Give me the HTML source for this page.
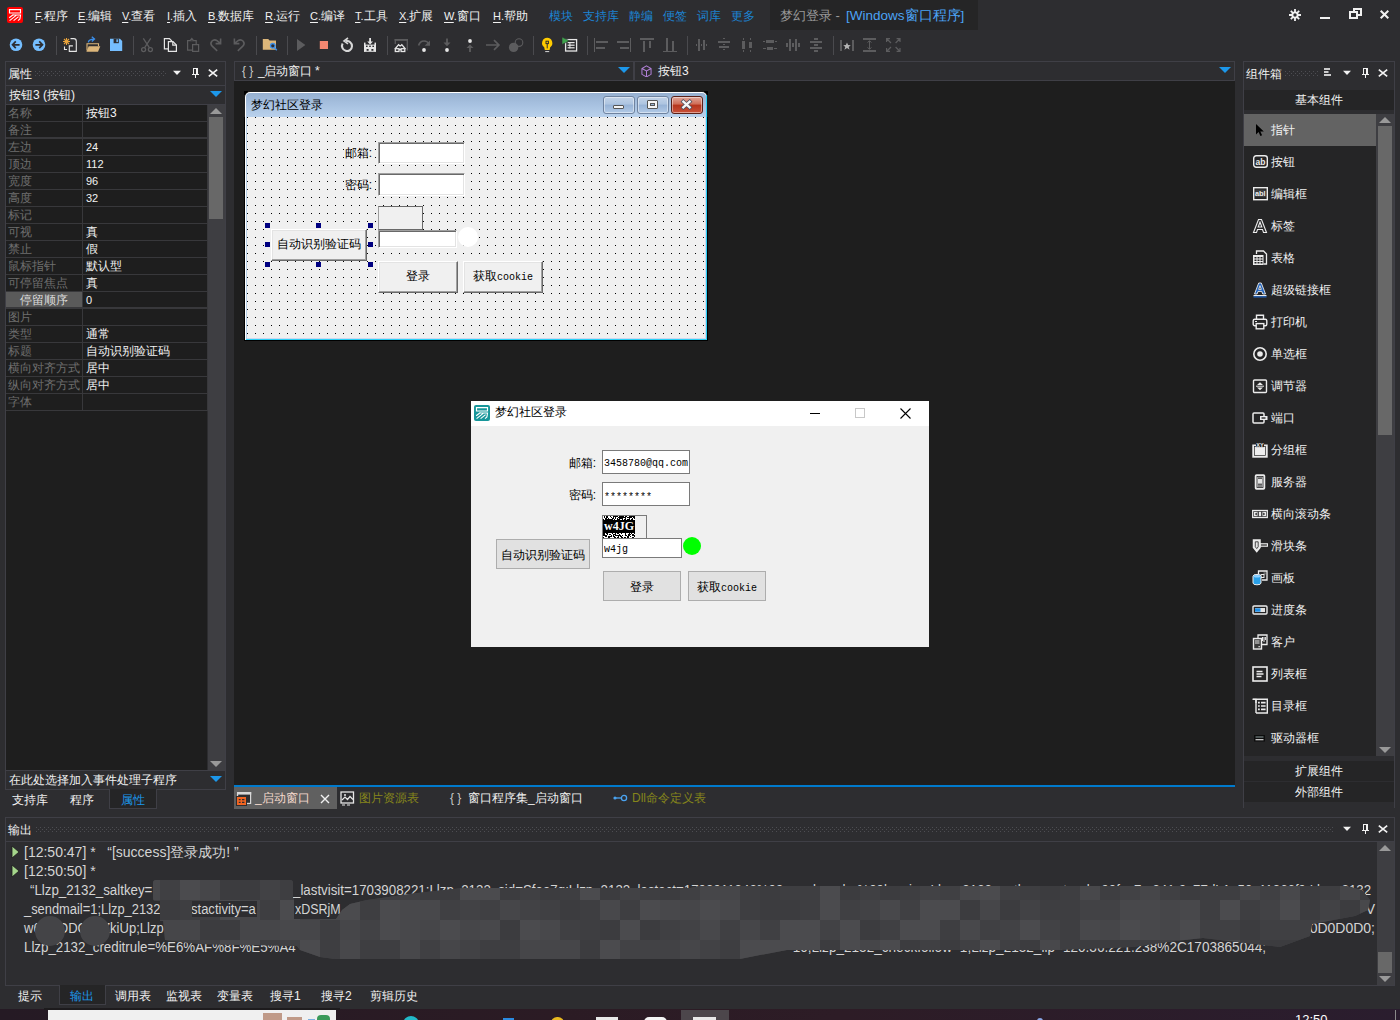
<!DOCTYPE html><html><head><meta charset="utf-8"><title>梦幻登录</title><style>
*{box-sizing:border-box;margin:0;padding:0}
html,body{width:1400px;height:1020px;overflow:hidden;background:#2d2d30}
body{font-family:"Liberation Sans",sans-serif;font-size:12px;color:#f1f1f1;position:relative}
.a{position:absolute}
.t{position:absolute;white-space:nowrap;line-height:16px;height:16px}
.m{position:absolute;white-space:nowrap;line-height:16px;height:16px;top:8px;font-size:12px;color:#f1f1f1}
.m i{font-style:normal;font-size:11px}
.m u{text-decoration:underline;text-underline-offset:2px}
.mb{color:#1c84d4}
.sep{position:absolute;width:1px;top:36px;height:19px;background:#4a4a4e}
.pl{position:absolute;left:6px;width:76px;height:16px;line-height:16px;background:#1e1e1e;color:#6e6e6e;padding-left:2px;white-space:nowrap;overflow:hidden;font-size:12px}
.pv{position:absolute;left:83px;width:124px;height:16px;line-height:16px;background:#1e1e1e;color:#f1f1f1;padding-left:3px;white-space:nowrap;overflow:hidden;font-size:12px}
.ti{position:absolute;left:1244px;width:133px;height:32px}
.ti span{position:absolute;left:27px;top:8px;line-height:16px;font-size:12px;color:#f1f1f1;white-space:nowrap}
.ti svg{position:absolute;left:8px;top:8px}
.ol{position:absolute;left:24px;white-space:nowrap;font-size:14px;line-height:19px;height:19px;color:#d4d4d4}
.bt{position:absolute;white-space:nowrap;line-height:16px;height:16px;top:988px;font-size:12px;color:#f1f1f1}
.wl{position:absolute;white-space:nowrap;color:#000;font-size:12px;line-height:14px}
</style></head><body>
<!-- menu bar -->
<svg class="a" style="left:7px;top:7px" width="16" height="16" viewBox="0 0 16 16"><rect width="16" height="16" rx="2" fill="#ff0000"/><path d="M2.500 2.600h11v3.400h-11zM6 8h7.500l-.600 4-1.900 1.600M2.200 10.800l4.300-3.300M2.600 13.600l6.600-5.200M6.600 13.600l5-4" stroke="#fff" stroke-width="1.150" fill="none"/></svg>
<div class="m" style="left:35px"><i><u>F</u>.</i>程序</div>
<div class="m" style="left:78px"><i><u>E</u>.</i>编辑</div>
<div class="m" style="left:122px"><i><u>V</u>.</i>查看</div>
<div class="m" style="left:167px"><i><u>I</u>.</i>插入</div>
<div class="m" style="left:208px"><i><u>B</u>.</i>数据库</div>
<div class="m" style="left:265px"><i><u>R</u>.</i>运行</div>
<div class="m" style="left:310px"><i><u>C</u>.</i>编译</div>
<div class="m" style="left:355px"><i><u>T</u>.</i>工具</div>
<div class="m" style="left:399px"><i><u>X</u>.</i>扩展</div>
<div class="m" style="left:444px"><i><u>W</u>.</i>窗口</div>
<div class="m" style="left:493px"><i><u>H</u>.</i>帮助</div>
<div class="m mb" style="left:549px">模块</div>
<div class="m mb" style="left:583px">支持库</div>
<div class="m mb" style="left:629px">静编</div>
<div class="m mb" style="left:663px">便签</div>
<div class="m mb" style="left:697px">词库</div>
<div class="m mb" style="left:731px">更多</div>
<div class="a" style="left:770px;top:0;width:208px;height:30px;background:#252526"></div>
<div class="t" style="left:780px;top:7px;font-size:13px;line-height:18px;height:18px;color:#999">梦幻登录 -</div>
<div class="t" style="left:846px;top:7px;font-size:13.5px;line-height:18px;height:18px;color:#4ba3f5">[Windows窗口程序]</div>
<svg class="a" style="left:1288px;top:8px" width="14" height="14" viewBox="0 0 14 14"><g stroke="#f1f1f1" stroke-width="1.8"><path d="M7 1v12M1 7h12M2.8 2.8l8.4 8.4M11.2 2.8l-8.4 8.4"/></g><circle cx="7" cy="7" r="3.6" fill="#f1f1f1"/><circle cx="7" cy="7" r="1.7" fill="#2d2d30"/></svg>
<div class="a" style="left:1320px;top:17px;width:10px;height:2px;background:#f1f1f1"></div>
<svg class="a" style="left:1349px;top:8px" width="13" height="11" viewBox="0 0 13 11" shape-rendering="crispEdges"><g fill="#f1f1f1"><rect x="4" y="0" width="9" height="2"/><rect x="11" y="0" width="2" height="8"/><rect x="4" y="0" width="2" height="3"/><rect x="9" y="6" width="4" height="2"/><rect x="0" y="3" width="9" height="2"/><rect x="0" y="9" width="9" height="2"/><rect x="0" y="3" width="2" height="8"/><rect x="7" y="3" width="2" height="8"/></g></svg>
<svg class="a" style="left:1379px;top:9px" width="11" height="11" viewBox="0 0 11 11"><path d="M1.700 1.700l7.600 7.600M9.300 1.700l-7.600 7.600" stroke="#f1f1f1" stroke-width="2"/></svg>
<!-- toolbar -->
<svg class="a" style="left:0;top:30px" width="920" height="30" viewBox="0 30 920 30"><circle cx="16" cy="44.8" r="6.3" fill="#75beff"/><path d="M19.6 44.8H12.8M15.8 41.4l-3.3 3.4 3.3 3.4" stroke="#2d2d30" stroke-width="1.7" fill="none"/><circle cx="39" cy="44.8" r="6.3" fill="#75beff"/><path d="M35.4 44.8H42.2M39.2 41.4l3.3 3.4-3.3 3.4" stroke="#2d2d30" stroke-width="1.7" fill="none"/><g stroke="#e8a33c" stroke-width="1.1"><path d="M66.5 38v7M63 41.5h7M64 39l5 5M69 39l-5 5"/></g><path d="M70.5 38.6h3.2q2.6 0 2.6 2.6v10.2h-7v-5.5h3.6M64.5 46.5v3h2.6" stroke="#e6e6e6" stroke-width="1.1" fill="none"/><path d="M87 50.5V43.8h11.5V46" stroke="#dcb67a" stroke-width="1.1" fill="none"/><path d="M86.4 51.8l2.3-5.6h11.6l-2.3 5.6z" fill="#dcb67a"/><path d="M88.3 42.3q.6-3.2 5.6-3.2M91.8 36.8l2.7 2.3-2.7 2.3" stroke="#3b8eea" stroke-width="1.3" fill="none"/><path d="M110 38.8h10l2.2 2.2v10h-12.2z" fill="#75beff"/><rect x="113.6" y="38.8" width="5.2" height="4.4" fill="#2d2d30"/><rect x="116.4" y="39.3" width="1.5" height="2.8" fill="#75beff"/><g stroke="#5c5c5e" stroke-width="1.3" fill="none"><path d="M143.3 38.3l6.2 9.6M150.7 38.3l-6.2 9.6"/><circle cx="143.6" cy="49.6" r="2"/><circle cx="150.4" cy="49.6" r="2"/></g><g stroke="#e6e6e6" stroke-width="1.2" fill="#2d2d30"><path d="M164.4 38.6h5l2.2 2.2v8h-7.2z"/><path d="M168.4 41.6h4.6l3.4 3.4v6.4h-8z"/><path d="M172.8 41.8v3.4h3.4" fill="none"/></g><g stroke="#5c5c5e" stroke-width="1.2" fill="#2d2d30"><path d="M187.6 40.6h8.6v9.6h-8.6z"/><path d="M190 40.6l1.8-2.2 1.8 2.2"/><path d="M192.6 44.6h6v6.8h-6z"/></g><g stroke="#5c5c5e" stroke-width="1.6" fill="none"><path d="M217.2 50.8l-5-4.6q-2.4-2.6-.4-5 2.4-2.4 5.2-.6l3 2.4M220.6 38.6v5h-5"/><path d="M237.8 50.8l5-4.6q2.4-2.6.4-5-2.4-2.4-5.2-.6l-3 2.4M234.4 38.6v5h5"/></g><path d="M262.8 39h5.4l1.4 1.6h6.4v9.2h-13.2z" fill="#dcb67a"/><circle cx="272.8" cy="45.8" r="2.3" fill="#2d2d30" stroke="#3b8eea" stroke-width="1.3"/><path d="M274.4 47.6l2.4 2.6" stroke="#3b8eea" stroke-width="1.5"/><path d="M297 39l8.4 6-8.4 6z" fill="#5c5c5e"/><rect x="319.8" y="41" width="8.2" height="8" fill="#f48771"/><path d="M346 41.100A5 5 0 1 1 342.600 43.600" stroke="#d6d6d6" stroke-width="2.100" fill="none"/><path d="M348 38l-4 3 4 2.800" stroke="#d6d6d6" stroke-width="1.600" fill="none"/><g fill="#e6e6e6"><path d="M369.2 38h1.8v3.6h2l-2.9 3-2.9-3h2z"/><rect x="364" y="42.6" width="1.5" height="9"/><rect x="374.5" y="42.6" width="1.5" height="9"/><rect x="364" y="44.6" width="12" height="7.2"/></g><g fill="#2d2d30"><rect x="366" y="45.6" width="1.6" height="1.4"/><rect x="369.2" y="45.6" width="1.6" height="1.4"/><rect x="372.4" y="45.6" width="1.6" height="1.4"/><rect x="366.6" y="49" width="2" height="1.8"/><rect x="371.4" y="49" width="2" height="1.8"/></g><path d="M395.300 44V39.700h12v10.800" stroke="#5c5c5e" stroke-width="1.300" fill="none"/><rect x="394.600" y="39" width="13.400" height="1.800" fill="#5c5c5e"/><g stroke="#e6e6e6" stroke-width="1.300" fill="none"><path d="M395 49l3.600-4.400 1.500 1.500M405.400 49l-3.600-4.400-1.500 1.500"/><rect x="395.300" y="48.700" width="3.700" height="2.800" fill="#2d2d30"/><rect x="401.100" y="48.700" width="3.700" height="2.800" fill="#2d2d30"/><path d="M399 49.600h2.100"/></g><path d="M418.6 45.4q1.400-4.400 5.400-4.400 3.600 0 4.800 3" stroke="#5c5c5e" stroke-width="1.7" fill="none"/><path d="M430 40.400v5.400h-5.400z" fill="#5c5c5e"/><circle cx="424" cy="50" r="1.9" fill="#e6e6e6"/><path d="M446.100 38.600h1.800v4h2.600l-3.500 3.600-3.500-3.600h2.600z" fill="#5c5c5e"/><circle cx="447" cy="50" r="1.900" fill="#e6e6e6"/><circle cx="470" cy="41" r="1.900" fill="#e6e6e6"/><path d="M469.100 52v-4h-2.600l3.500-3.600 3.500 3.600h-2.600v4z" fill="#5c5c5e"/><path d="M486 45h12.500M494 40.200l4.900 4.800-4.900 4.800" stroke="#5c5c5e" stroke-width="1.700" fill="none"/><circle cx="519" cy="42.600" r="3.800" stroke="#5c5c5e" stroke-width="1.100" fill="none"/><circle cx="513.600" cy="47.400" r="4.700" fill="#5c5c5e"/><path d="M547.2 37.800a5.200 5.200 0 0 1 3 9.400l-.6 2.800h-4.800l-.6-2.800a5.200 5.200 0 0 1 3-9.400z" fill="#ffcc00"/><rect x="546" y="41.200" width="2.400" height="2.400" fill="none" stroke="#2d2d30" stroke-width="1"/><rect x="546.700" y="43.800" width="1" height="4.600" fill="#2d2d30"/><rect x="545.200" y="51" width="4" height="1.100" fill="#c8c8c8"/><rect x="565.600" y="39.600" width="11" height="11.400" fill="#2d2d30" stroke="#e6e6e6" stroke-width="1.300"/><g fill="#e6e6e6"><rect x="567.600" y="42" width="7" height="1.200"/><rect x="567.600" y="44.600" width="7" height="1.200"/><rect x="567.600" y="47.200" width="7" height="1.200"/><rect x="569.400" y="42" width="1" height="6.400"/></g><path d="M562 37l7.400 3.800-7.400 3.800z" fill="#3fa34d" stroke="#2d2d30" stroke-width=".6"/><g shape-rendering="crispEdges" fill="#5c5c5e"><rect x="594" y="38" width="1" height="14"/><rect x="596" y="41" width="12" height="2"/><rect x="596" y="47" width="9" height="2"/><rect x="630" y="38" width="1" height="14"/><rect x="617" y="41" width="12" height="2"/><rect x="620" y="47" width="9" height="2"/><rect x="640" y="38" width="14" height="2"/><rect x="643" y="41" width="2" height="11"/><rect x="649" y="41" width="2" height="7"/><rect x="663" y="51" width="14" height="1"/><rect x="666" y="38" width="2" height="13"/><rect x="672" y="41" width="2" height="10"/><rect x="698" y="39" width="2" height="12"/><rect x="703" y="40" width="2" height="10"/><rect x="696" y="44" width="1" height="2"/><rect x="701" y="44" width="1" height="2"/><rect x="706" y="44" width="1" height="2"/><rect x="718" y="41" width="12" height="2"/><rect x="719" y="46" width="10" height="2"/><rect x="723" y="38" width="2" height="1"/><rect x="723" y="44" width="2" height="1"/><rect x="723" y="49" width="2" height="1"/><rect x="742" y="41" width="3" height="8"/><rect x="749" y="42" width="3" height="6"/><rect x="743" y="38" width="1" height="2"/><rect x="743" y="50" width="1" height="2"/><rect x="750" y="38" width="1" height="2"/><rect x="750" y="50" width="1" height="2"/><rect x="766" y="40" width="8" height="3"/><rect x="767" y="47" width="6" height="3"/><rect x="763" y="41" width="2" height="1"/><rect x="775" y="41" width="2" height="1"/><rect x="763" y="48" width="3" height="1"/><rect x="774" y="48" width="3" height="1"/><rect x="789" y="39" width="2" height="12"/><rect x="795" y="39" width="2" height="12"/><rect x="786" y="43" width="2" height="4"/><rect x="792" y="43" width="2" height="4"/><rect x="798" y="43" width="2" height="4"/><rect x="810" y="41" width="12" height="2"/><rect x="810" y="47" width="12" height="2"/><rect x="814" y="38" width="4" height="2"/><rect x="814" y="44" width="4" height="2"/><rect x="814" y="50" width="4" height="2"/><rect x="840" y="40" width="2" height="11"/><rect x="852" y="40" width="2" height="11"/><rect x="863" y="38" width="13" height="2"/><rect x="863" y="50" width="13" height="2"/><rect x="869" y="41" width="1" height="8"/></g><path d="M847 42.400l1.100 2.600 2.700.300-2.100 1.700.900 2.800-2.600-1.700-2.600 1.700.900-2.800-2.100-1.700 2.700-.300z" fill="#b4b4b4"/><path d="M867.500 42.500l2-1.700 2 1.700M867.500 47.500l2 1.700 2-1.700" stroke="#5c5c5e" stroke-width="1" fill="none"/><g stroke="#5c5c5e" stroke-width="1.200" fill="none"><path d="M886.600 42v-3.400h3.400M887 39l4 4M896.600 38.600h3.400v3.400M899.600 39l-4 4M886.600 48v3.400h3.400M887 51l4-4M900 48v3.400h-3.400M899.600 51l-4-4"/></g></svg>
<div class="sep" style="left:56px"></div>
<div class="sep" style="left:133px"></div>
<div class="sep" style="left:256px"></div>
<div class="sep" style="left:287px"></div>
<div class="sep" style="left:387px"></div>
<div class="sep" style="left:533px"></div>
<div class="sep" style="left:587px"></div>
<div class="sep" style="left:687px"></div>
<div class="sep" style="left:833px"></div>
<!-- left panel -->
<div class="a" style="left:5px;top:61px;width:221px;height:729px;border:1px solid #3f3f46"></div>
<div class="t" style="left:8px;top:66px;font-size:12px">属性</div>
<svg class="a" style="left:35px;top:71px" width="131" height="5"><defs><pattern id="g35" width="4" height="4" patternUnits="userSpaceOnUse"><rect x="0" y="0" width="1" height="1" fill="#4d4d52"/><rect x="2" y="2" width="1" height="1" fill="#4d4d52"/></pattern></defs><rect width="131" height="5" fill="url(#g35)"/></svg>
<svg class="a" style="left:171px;top:66px" width="50" height="14" viewBox="0 0 50 14"><path d="M2 4.800h8l-4 4.200z" fill="#f1f1f1"/><g fill="#f1f1f1" shape-rendering="crispEdges"><rect x="22" y="2" width="5" height="1"/><rect x="22" y="2" width="1" height="6"/><rect x="25" y="2" width="2" height="6"/><rect x="21" y="8" width="7" height="1"/><rect x="24" y="9" width="1" height="3"/></g><path d="M37.800 3.600l8.400 6.800M46.200 3.600l-8.400 6.800" stroke="#f1f1f1" stroke-width="1.700"/></svg>
<div class="a" style="left:6px;top:85px;width:219px;height:1px;background:#3f3f46"></div>
<div class="t" style="left:9px;top:87px;font-size:12px">按钮3 (按钮)</div>
<svg class="a" style="left:210px;top:91px" width="12" height="6" viewBox="0 0 12 6"><path d="M0 0h12l-6 6z" fill="#1c97ea"/></svg>
<div class="a" style="left:6px;top:104px;width:219px;height:1px;background:#3f3f46"></div>
<div class="a" style="left:6px;top:105px;width:202px;height:306px;background:#38383b"></div>
<div class="a" style="left:6px;top:411px;width:201px;height:359px;background:#1e1e1e"></div>
<div class="pl" style="top:105px">名称</div>
<div class="pv" style="top:105px">按钮3</div>
<div class="pl" style="top:122px">备注</div>
<div class="pv" style="top:122px"></div>
<div class="pl" style="top:139px">左边</div>
<div class="pv" style="top:139px;font-size:11px">24</div>
<div class="pl" style="top:156px">顶边</div>
<div class="pv" style="top:156px;font-size:11px">112</div>
<div class="pl" style="top:173px">宽度</div>
<div class="pv" style="top:173px;font-size:11px">96</div>
<div class="pl" style="top:190px">高度</div>
<div class="pv" style="top:190px;font-size:11px">32</div>
<div class="pl" style="top:207px">标记</div>
<div class="pv" style="top:207px"></div>
<div class="pl" style="top:224px">可视</div>
<div class="pv" style="top:224px">真</div>
<div class="pl" style="top:241px">禁止</div>
<div class="pv" style="top:241px">假</div>
<div class="pl" style="top:258px">鼠标指针</div>
<div class="pv" style="top:258px">默认型</div>
<div class="pl" style="top:275px">可停留焦点</div>
<div class="pv" style="top:275px">真</div>
<div class="pl" style="top:292px;background:#5a5a5a;color:#dcdcdc;padding-left:14px">停留顺序</div>
<div class="pv" style="top:292px;font-size:11px">0</div>
<div class="pl" style="top:309px">图片</div>
<div class="pv" style="top:309px"></div>
<div class="pl" style="top:326px">类型</div>
<div class="pv" style="top:326px">通常</div>
<div class="pl" style="top:343px">标题</div>
<div class="pv" style="top:343px">自动识别验证码</div>
<div class="pl" style="top:360px">横向对齐方式</div>
<div class="pv" style="top:360px">居中</div>
<div class="pl" style="top:377px">纵向对齐方式</div>
<div class="pv" style="top:377px">居中</div>
<div class="pl" style="top:394px">字体</div>
<div class="pv" style="top:394px"></div>
<div class="a" style="left:6px;top:137px;width:201px;height:1px;background:#38383b"></div>
<div class="a" style="left:6px;top:307px;width:201px;height:1px;background:#38383b"></div>
<div class="a" style="left:208px;top:105px;width:17px;height:665px;background:#3e3e42"></div>
<div class="a" style="left:209px;top:117px;width:14px;height:102px;background:#686868"></div>
<svg class="a" style="left:210px;top:108px" width="12" height="6" viewBox="0 0 12 6"><path d="M0 6l6-6 6 6z" fill="#999"/></svg>
<svg class="a" style="left:210px;top:761px" width="12" height="6" viewBox="0 0 12 6"><path d="M0 0h12l-6 6z" fill="#999"/></svg>
<div class="a" style="left:6px;top:770px;width:219px;height:1px;background:#3f3f46"></div>
<div class="t" style="left:9px;top:772px;font-size:12px">在此处选择加入事件处理子程序</div>
<svg class="a" style="left:210px;top:776px" width="12" height="6" viewBox="0 0 12 6"><path d="M0 0h12l-6 6z" fill="#1c97ea"/></svg>
<div class="t" style="left:12px;top:792px;font-size:12px">支持库</div>
<div class="t" style="left:70px;top:792px;font-size:12px">程序</div>
<div class="a" style="left:109px;top:789px;width:48px;height:20px;background:#252526;border:1px solid #3f3f46;border-top:none"></div>
<div class="t" style="left:121px;top:792px;font-size:12px;color:#1c97ea">属性</div>
<!-- editor -->
<div class="a" style="left:234px;top:61px;width:1001px;height:20px;border:1px solid #3f3f46;background:#2d2d30"></div>
<div class="a" style="left:633px;top:61px;width:2px;height:20px;background:#3f3f46"></div>
<div class="t" style="left:242px;top:63px;font-size:12px;color:#c8c8c8">{ }</div>
<div class="t" style="left:258px;top:63px;font-size:12px"><span style="margin-right:-1px">_</span>启动窗口 *</div>
<svg class="a" style="left:618px;top:67px" width="12" height="6" viewBox="0 0 12 6"><path d="M0 0h12l-6 6z" fill="#1c97ea"/></svg>
<svg class="a" style="left:1219px;top:67px" width="12" height="6" viewBox="0 0 12 6"><path d="M0 0h12l-6 6z" fill="#1c97ea"/></svg>
<svg class="a" style="left:640.500px;top:64.500px" width="11" height="12.800" viewBox="0 0 12 14"><path d="M6 1l5 2.800v6.400l-5 2.800-5-2.800v-6.400zM1 3.800l5 2.800 5-2.800M6 6.600v6.400" stroke="#b180d7" stroke-width="1.100" fill="none"/></svg>
<div class="t" style="left:658px;top:63px;font-size:12px">按钮3</div>
<div class="a" style="left:234px;top:81px;width:1001px;height:704px;background:#1e1e1e"></div>
<div class="a" style="left:234px;top:785px;width:1001px;height:2px;background:#007acc"></div>
<div class="a" style="left:244px;top:91px;width:4px;height:4px;background:#000"></div>
<div class="a" style="left:704px;top:91px;width:4px;height:4px;background:#000"></div>
<div class="a" style="left:244px;top:117px;width:1px;height:224px;background:#000"></div>
<div class="a" style="left:707px;top:117px;width:1px;height:224px;background:#000"></div>
<div class="a" style="left:244px;top:340px;width:464px;height:1px;background:#000"></div>
<div class="a" style="left:245px;top:92px;width:462px;height:248px;background:#fff;border-radius:5px 5px 0 0"></div>
<div class="a" style="left:706px;top:95px;width:1px;height:245px;background:#2ad0f6"></div>
<div class="a" style="left:246px;top:339px;width:461px;height:1px;background:#2ad0f6"></div>
<div class="a" style="left:246px;top:93px;width:460px;height:24px;border-radius:4px 4px 0 0;background:linear-gradient(#97b1d1,#a6c0df 45%,#b9d1ec)"></div>
<div class="a" style="left:246px;top:117px;width:460px;height:222px;background:#cdd8ee"></div>
<div class="a" style="left:246px;top:117px;width:1px;height:222px;background:#b9d1ea"></div>
<div class="wl" style="left:251px;top:98px;font-size:12px">梦幻社区登录</div>
<div class="a" style="left:603px;top:96px;width:32px;height:18px;border:1px solid #6f83a0;border-radius:3px;background:linear-gradient(#c2d3e8,#adc4e0 45%,#97b3d6 50%,#b1c9e6);box-shadow:inset 0 0 0 1px rgba(255,255,255,.45)"></div>
<div class="a" style="left:637px;top:96px;width:32px;height:18px;border:1px solid #6f83a0;border-radius:3px;background:linear-gradient(#c2d3e8,#adc4e0 45%,#97b3d6 50%,#b1c9e6);box-shadow:inset 0 0 0 1px rgba(255,255,255,.45)"></div>
<div class="a" style="left:671px;top:96px;width:32px;height:18px;border:1px solid #5a2018;border-radius:3px;background:linear-gradient(#e0a79a,#cf6b55 45%,#b5341c 50%,#c9513a);box-shadow:inset 0 0 0 1px rgba(255,255,255,.45)"></div>
<div class="a" style="left:613px;top:105px;width:11px;height:4px;background:#f4f4f4;border:1px solid #555;border-radius:1px"></div>
<div class="a" style="left:647px;top:100px;width:11px;height:9px;background:#f4f4f4;border:1px solid #555;border-radius:1px"></div><div class="a" style="left:650px;top:103px;width:5px;height:3px;background:#9ab4d4;border:1px solid #555"></div>
<svg class="a" style="left:680px;top:99px" width="13" height="11" viewBox="0 0 13 11"><path d="M3.300 2.600l6.400 5.800M9.700 2.600l-6.400 5.800" stroke="#4a4f60" stroke-width="3.800" stroke-linecap="square"/><path d="M3.300 2.600l6.400 5.800M9.700 2.600l-6.400 5.800" stroke="#f6f6f6" stroke-width="2.300" stroke-linecap="square"/></svg>
<div class="a" style="left:247px;top:117px;width:458px;height:221px;background-color:#f0f0f0;background-image:linear-gradient(#000,#000);background-size:1px 1px;background-repeat:no-repeat;background-position:-10px -10px"></div>
<svg class="a" style="left:247px;top:117px" width="458" height="221" shape-rendering="crispEdges"><defs><pattern id="dots" width="8" height="8" patternUnits="userSpaceOnUse"><rect x="0" y="0" width="1" height="1" fill="#000"/></pattern></defs><rect width="458" height="221" fill="url(#dots)"/></svg>
<div class="wl" style="right:1028px;top:146px">邮箱:</div>
<div class="a" style="left:378px;top:142px;width:87px;height:22px;background:#fff;border-top:1px solid #a0a0a0;border-left:1px solid #a0a0a0;border-right:1px solid #fff;border-bottom:1px solid #fff;box-shadow:inset 1px 1px 0 #696969,inset -1px -1px 0 #e3e3e3"></div>
<div class="wl" style="right:1028px;top:178px">密码:</div>
<div class="a" style="left:378px;top:173px;width:87px;height:23px;background:#fff;border-top:1px solid #a0a0a0;border-left:1px solid #a0a0a0;border-right:1px solid #fff;border-bottom:1px solid #fff;box-shadow:inset 1px 1px 0 #696969,inset -1px -1px 0 #e3e3e3"></div>
<div class="a" style="left:378px;top:206px;width:45px;height:24px;background:#f0f0f0;border:1px solid #696969;border-left-color:#a0a0a0"></div>
<div class="a" style="left:378px;top:230px;width:79px;height:18px;background:#fff;border-top:1px solid #a0a0a0;border-left:1px solid #a0a0a0;border-right:1px solid #fff;border-bottom:1px solid #fff;box-shadow:inset 1px 1px 0 #696969,inset -1px -1px 0 #e3e3e3"></div>
<div class="a" style="left:458px;top:227px;width:20px;height:20px;border-radius:50%;background:#fff"></div>
<div class="a" style="left:271px;top:229px;width:96px;height:32px;background:#f0f0f0;border-top:1px solid #fff;border-left:1px solid #fff;border-right:1px solid #696969;border-bottom:1px solid #696969;box-shadow:inset -1px -1px 0 #a0a0a0,inset 1px 1px 0 #e3e3e3;color:#000;font-size:12px;text-align:center;line-height:28px;white-space:nowrap">自动识别验证码</div>
<div class="a" style="left:378px;top:261px;width:80px;height:32px;background:#f0f0f0;border-top:1px solid #fff;border-left:1px solid #fff;border-right:1px solid #696969;border-bottom:1px solid #696969;box-shadow:inset -1px -1px 0 #a0a0a0,inset 1px 1px 0 #e3e3e3;color:#000;font-size:12px;text-align:center;line-height:28px;white-space:nowrap">登录</div>
<div class="a" style="left:463px;top:261px;width:80px;height:32px;background:#f0f0f0;border-top:1px solid #fff;border-left:1px solid #fff;border-right:1px solid #696969;border-bottom:1px solid #696969;box-shadow:inset -1px -1px 0 #a0a0a0,inset 1px 1px 0 #e3e3e3;color:#000;font-size:12px;text-align:center;line-height:28px;white-space:nowrap">获取<span style="font-family:'Liberation Mono',monospace;font-size:10px">cookie</span></div>
<div class="a" style="left:265px;top:223px;width:5px;height:5px;background:#000080"></div>
<div class="a" style="left:316px;top:223px;width:5px;height:5px;background:#000080"></div>
<div class="a" style="left:368px;top:223px;width:5px;height:5px;background:#000080"></div>
<div class="a" style="left:265px;top:242px;width:5px;height:5px;background:#000080"></div>
<div class="a" style="left:368px;top:242px;width:5px;height:5px;background:#000080"></div>
<div class="a" style="left:265px;top:262px;width:5px;height:5px;background:#000080"></div>
<div class="a" style="left:316px;top:262px;width:5px;height:5px;background:#000080"></div>
<div class="a" style="left:368px;top:262px;width:5px;height:5px;background:#000080"></div>
<div class="a" style="left:471px;top:401px;width:458px;height:246px;background:#f0f0f0"></div>
<div class="a" style="left:471px;top:401px;width:458px;height:25px;background:#fff"></div>
<svg class="a" style="left:474px;top:405px" width="16" height="16" viewBox="0 0 16 16"><rect width="16" height="16" rx="2" fill="#17969a"/><path d="M2.500 2.600h11v3.400h-11zM6 8h7.500l-.600 4-1.900 1.600M2.200 10.800l4.300-3.300M2.600 13.600l6.600-5.200M6.600 13.600l5-4" stroke="#fff" stroke-width="1.150" fill="none"/></svg>
<div class="wl" style="left:495px;top:405px;font-size:12px">梦幻社区登录</div>
<div class="a" style="left:810px;top:413px;width:10px;height:1px;background:#000"></div>
<div class="a" style="left:855px;top:408px;width:10px;height:10px;border:1px solid #c8c8c8"></div>
<svg class="a" style="left:900px;top:408px" width="11" height="11" viewBox="0 0 11 11"><path d="M.500.500l10 10M10.500.500l-10 10" stroke="#000" stroke-width="1.100"/></svg>
<div class="wl" style="right:804px;top:456px">邮箱:</div>
<div class="a" style="left:602px;top:450px;width:88px;height:24px;background:#fff;border:1px solid #7a7a7a;color:#000;font-family:'Liberation Mono',monospace;font-size:10px;line-height:22px;padding-left:1px;white-space:nowrap;overflow:hidden"><span style="display:inline-block;position:relative;top:2px;transform:scaleY(1.150)">3458780@qq.com</span></div>
<div class="wl" style="right:804px;top:488px">密码:</div>
<div class="a" style="left:602px;top:482px;width:88px;height:24px;background:#fff;border:1px solid #7a7a7a;color:#000;font-family:'Liberation Mono',monospace;font-size:10px;line-height:22px;padding-left:1px;white-space:nowrap;overflow:hidden"><span style="display:inline-block;position:relative;top:4px;transform:scaleY(1.150)">********</span></div>
<div class="a" style="left:602px;top:515px;width:45px;height:24px;background:#f0f0f0;border:1px solid #7a7a7a"></div>
<svg class="a" style="left:603px;top:516px" width="32" height="22" shape-rendering="crispEdges"><rect width="32" height="22" fill="#000"/><g fill="#fff"><rect x="0" y="0" width="1" height="1"/><rect x="2" y="0" width="1" height="1"/><rect x="5" y="0" width="1" height="1"/><rect x="6" y="0" width="1" height="1"/><rect x="8" y="0" width="1" height="1"/><rect x="9" y="0" width="1" height="1"/><rect x="15" y="0" width="1" height="1"/><rect x="21" y="0" width="1" height="1"/><rect x="24" y="0" width="1" height="1"/><rect x="25" y="0" width="1" height="1"/><rect x="0" y="1" width="1" height="1"/><rect x="2" y="1" width="1" height="1"/><rect x="5" y="1" width="1" height="1"/><rect x="6" y="1" width="1" height="1"/><rect x="7" y="1" width="1" height="1"/><rect x="9" y="1" width="1" height="1"/><rect x="11" y="1" width="1" height="1"/><rect x="13" y="1" width="1" height="1"/><rect x="14" y="1" width="1" height="1"/><rect x="23" y="1" width="1" height="1"/><rect x="29" y="1" width="1" height="1"/><rect x="0" y="2" width="1" height="1"/><rect x="1" y="2" width="1" height="1"/><rect x="4" y="2" width="1" height="1"/><rect x="6" y="2" width="1" height="1"/><rect x="7" y="2" width="1" height="1"/><rect x="8" y="2" width="1" height="1"/><rect x="11" y="2" width="1" height="1"/><rect x="13" y="2" width="1" height="1"/><rect x="15" y="2" width="1" height="1"/><rect x="20" y="2" width="1" height="1"/><rect x="21" y="2" width="1" height="1"/><rect x="23" y="2" width="1" height="1"/><rect x="24" y="2" width="1" height="1"/><rect x="25" y="2" width="1" height="1"/><rect x="27" y="2" width="1" height="1"/><rect x="28" y="2" width="1" height="1"/><rect x="30" y="2" width="1" height="1"/><rect x="1" y="3" width="1" height="1"/><rect x="10" y="3" width="1" height="1"/><rect x="12" y="3" width="1" height="1"/><rect x="13" y="3" width="1" height="1"/><rect x="17" y="3" width="1" height="1"/><rect x="18" y="3" width="1" height="1"/><rect x="20" y="3" width="1" height="1"/><rect x="23" y="3" width="1" height="1"/><rect x="27" y="3" width="1" height="1"/><rect x="30" y="3" width="1" height="1"/><rect x="31" y="3" width="1" height="1"/><rect x="2" y="17" width="1" height="1"/><rect x="5" y="17" width="1" height="1"/><rect x="6" y="17" width="1" height="1"/><rect x="7" y="17" width="1" height="1"/><rect x="8" y="17" width="1" height="1"/><rect x="10" y="17" width="1" height="1"/><rect x="11" y="17" width="1" height="1"/><rect x="13" y="17" width="1" height="1"/><rect x="16" y="17" width="1" height="1"/><rect x="17" y="17" width="1" height="1"/><rect x="19" y="17" width="1" height="1"/><rect x="20" y="17" width="1" height="1"/><rect x="21" y="17" width="1" height="1"/><rect x="23" y="17" width="1" height="1"/><rect x="24" y="17" width="1" height="1"/><rect x="25" y="17" width="1" height="1"/><rect x="27" y="17" width="1" height="1"/><rect x="29" y="17" width="1" height="1"/><rect x="30" y="17" width="1" height="1"/><rect x="2" y="18" width="1" height="1"/><rect x="3" y="18" width="1" height="1"/><rect x="5" y="18" width="1" height="1"/><rect x="8" y="18" width="1" height="1"/><rect x="9" y="18" width="1" height="1"/><rect x="13" y="18" width="1" height="1"/><rect x="14" y="18" width="1" height="1"/><rect x="15" y="18" width="1" height="1"/><rect x="17" y="18" width="1" height="1"/><rect x="18" y="18" width="1" height="1"/><rect x="19" y="18" width="1" height="1"/><rect x="20" y="18" width="1" height="1"/><rect x="21" y="18" width="1" height="1"/><rect x="23" y="18" width="1" height="1"/><rect x="24" y="18" width="1" height="1"/><rect x="28" y="18" width="1" height="1"/><rect x="31" y="18" width="1" height="1"/><rect x="4" y="19" width="1" height="1"/><rect x="5" y="19" width="1" height="1"/><rect x="6" y="19" width="1" height="1"/><rect x="7" y="19" width="1" height="1"/><rect x="9" y="19" width="1" height="1"/><rect x="11" y="19" width="1" height="1"/><rect x="18" y="19" width="1" height="1"/><rect x="20" y="19" width="1" height="1"/><rect x="21" y="19" width="1" height="1"/><rect x="24" y="19" width="1" height="1"/><rect x="27" y="19" width="1" height="1"/><rect x="28" y="19" width="1" height="1"/><rect x="0" y="20" width="1" height="1"/><rect x="1" y="20" width="1" height="1"/><rect x="4" y="20" width="1" height="1"/><rect x="9" y="20" width="1" height="1"/><rect x="12" y="20" width="1" height="1"/><rect x="13" y="20" width="1" height="1"/><rect x="14" y="20" width="1" height="1"/><rect x="16" y="20" width="1" height="1"/><rect x="19" y="20" width="1" height="1"/><rect x="20" y="20" width="1" height="1"/><rect x="21" y="20" width="1" height="1"/><rect x="22" y="20" width="1" height="1"/><rect x="23" y="20" width="1" height="1"/><rect x="26" y="20" width="1" height="1"/><rect x="28" y="20" width="1" height="1"/><rect x="29" y="20" width="1" height="1"/><rect x="30" y="20" width="1" height="1"/><rect x="1" y="21" width="1" height="1"/><rect x="2" y="21" width="1" height="1"/><rect x="3" y="21" width="1" height="1"/><rect x="4" y="21" width="1" height="1"/><rect x="7" y="21" width="1" height="1"/><rect x="8" y="21" width="1" height="1"/><rect x="9" y="21" width="1" height="1"/><rect x="10" y="21" width="1" height="1"/><rect x="13" y="21" width="1" height="1"/><rect x="16" y="21" width="1" height="1"/><rect x="17" y="21" width="1" height="1"/><rect x="20" y="21" width="1" height="1"/><rect x="23" y="21" width="1" height="1"/><rect x="26" y="21" width="1" height="1"/><rect x="27" y="21" width="1" height="1"/><rect x="28" y="21" width="1" height="1"/><rect x="31" y="21" width="1" height="1"/></g></svg>
<div class="a" style="left:604px;top:520px;width:30px;height:13px;color:#fff;font-family:'Liberation Serif',serif;font-weight:bold;font-size:12px;line-height:13px;letter-spacing:0">w4JG</div>
<div class="a" style="left:602px;top:538px;width:80px;height:20px;background:#fff;border:1px solid #7a7a7a;color:#000;font-family:'Liberation Mono',monospace;font-size:10px;line-height:18px;padding-left:1px;white-space:nowrap;overflow:hidden"><span style="display:inline-block;position:relative;top:2px;transform:scaleY(1.150)">w4jg</span></div>
<div class="a" style="left:683px;top:537px;width:18px;height:18px;border-radius:50%;background:#00ff00"></div>
<div class="a" style="left:496px;top:539px;width:94px;height:30px;background:#e1e1e1;border:1px solid #adadad;color:#000;font-size:12px;text-align:center;line-height:30px;white-space:nowrap">自动识别验证码</div>
<div class="a" style="left:603px;top:571px;width:78px;height:30px;background:#e1e1e1;border:1px solid #adadad;color:#000;font-size:12px;text-align:center;line-height:30px;white-space:nowrap">登录</div>
<div class="a" style="left:688px;top:571px;width:78px;height:30px;background:#e1e1e1;border:1px solid #adadad;color:#000;font-size:12px;text-align:center;line-height:30px;white-space:nowrap">获取<span style="font-family:'Liberation Mono',monospace;font-size:10px">cookie</span></div>
<div class="a" style="left:234px;top:787px;width:103px;height:22px;background:#606060"></div>
<svg class="a" style="left:236px;top:790px" width="16" height="16" viewBox="0 0 16 16"><rect x="1.600" y="2.600" width="13" height="10.800" fill="#2d2d30" stroke="#d8d8d8" stroke-width="1.200"/><rect x="1" y="2" width="14.200" height="2.600" fill="#d8d8d8"/><rect x=".5" y="6.500" width="10" height="9" fill="#f26522" stroke="#2d2d30" stroke-width="1"/><path d="M2.800 9.700h1.800M6 9.700h2.400M2.800 12.400h1.800M6 12.400h2.400" stroke="#2d2d30" stroke-width="1.300"/></svg>
<div class="t" style="left:255px;top:790px;font-size:12px;color:#f4d9cc">_启动窗口</div>
<svg class="a" style="left:320px;top:794px" width="10" height="10" viewBox="0 0 10 10"><path d="M1 1l8 8M9 1l-8 8" stroke="#f1f1f1" stroke-width="1.400"/></svg>
<svg class="a" style="left:340px;top:791px" width="15" height="15" viewBox="0 0 15 15"><rect x="1" y="1" width="12.500" height="11" stroke="#e6e6e6" stroke-width="1.300" fill="none"/><path d="M2 9l3-3 2.500 2.500 2.500-3 3 3" stroke="#e6e6e6" stroke-width="1.200" fill="none"/><circle cx="5" cy="4" r="1" fill="#e6e6e6"/><path d="M2 14h3M7 14h3" stroke="#e6e6e6" stroke-width="1.200"/></svg>
<div class="t" style="left:359px;top:790px;font-size:12px;color:#85851b">图片资源表</div>
<div class="t" style="left:450px;top:790px;font-size:12px;color:#c8c8c8">{ }</div>
<div class="t" style="left:468px;top:790px;font-size:12px">窗口程序集_启动窗口</div>
<svg class="a" style="left:613px;top:793px" width="15" height="10" viewBox="0 0 15 10"><circle cx="2" cy="5" r="1.600" fill="#4aa3f0"/><path d="M2 5h7" stroke="#4aa3f0" stroke-width="1.300"/><circle cx="11" cy="5" r="2.600" stroke="#4aa3f0" stroke-width="1.300" fill="none"/></svg>
<div class="t" style="left:632px;top:790px;font-size:12px;color:#85851b">Dll命令定义表</div>
<!-- right panel: toolbox -->
<div class="a" style="left:1243px;top:61px;width:152px;height:747px;border:1px solid #3f3f46;border-bottom:none"></div>
<div class="t" style="left:1246px;top:66px;font-size:12px">组件箱</div>
<svg class="a" style="left:1285px;top:71px" width="34" height="5"><defs><pattern id="g1285" width="4" height="4" patternUnits="userSpaceOnUse"><rect x="0" y="0" width="1" height="1" fill="#4d4d52"/><rect x="2" y="2" width="1" height="1" fill="#4d4d52"/></pattern></defs><rect width="34" height="5" fill="url(#g1285)"/></svg>
<svg class="a" style="left:1324px;top:68px" width="8" height="9" viewBox="0 0 8 9"><path d="M0 1h6M0 4h4.500M0 7h7" stroke="#ffffff" stroke-width="1.400"/></svg>
<svg class="a" style="left:1341px;top:66px" width="50" height="14" viewBox="0 0 50 14"><path d="M2 4.800h8l-4 4.200z" fill="#f1f1f1"/><g fill="#f1f1f1" shape-rendering="crispEdges"><rect x="22" y="2" width="5" height="1"/><rect x="22" y="2" width="1" height="6"/><rect x="25" y="2" width="2" height="6"/><rect x="21" y="8" width="7" height="1"/><rect x="24" y="9" width="1" height="3"/></g><path d="M37.800 3.600l8.400 6.800M46.200 3.600l-8.400 6.800" stroke="#f1f1f1" stroke-width="1.700"/></svg>
<div class="a" style="left:1244px;top:90px;width:150px;height:20px;background:#252526"></div>
<div class="t" style="left:1244px;top:92px;width:150px;text-align:center;font-size:12px">基本组件</div>
<div class="a" style="left:1244px;top:114px;width:132px;height:642px;background:#252526"></div>
<div class="a" style="left:1244px;top:114px;width:132px;height:32px;background:#636363"></div>
<div class="a" style="left:1376px;top:114px;width:18px;height:642px;background:#3e3e42"></div>
<div class="a" style="left:1378px;top:126px;width:14px;height:309px;background:#686868"></div>
<svg class="a" style="left:1379px;top:117px" width="12" height="6" viewBox="0 0 12 6"><path d="M0 6l6-6 6 6z" fill="#999"/></svg>
<svg class="a" style="left:1379px;top:747px" width="12" height="6" viewBox="0 0 12 6"><path d="M0 0h12l-6 6z" fill="#999"/></svg>
<div class="ti" style="top:114px"><svg width="16" height="16" viewBox="0 0 16 16"><path d="M4 2v10.500l2.600-2.400 1.800 4 1.700-.800-1.800-3.800h3.500z" fill="#000"/></svg><span>指针</span></div>
<div class="ti" style="top:146px"><svg width="16" height="16" viewBox="0 0 16 16"><rect x="1.700" y="1.700" width="13.600" height="11.600" rx="2.500" stroke="#ececec" stroke-width="1.400" fill="none"/><text x="8.500" y="10.800" font-family="Liberation Sans" font-size="8.500" font-weight="bold" fill="#ececec" text-anchor="middle">ab</text></svg><span>按钮</span></div>
<div class="ti" style="top:178px"><svg width="16" height="16" viewBox="0 0 16 16"><rect x="1.700" y="1.700" width="13.600" height="12" stroke="#ececec" stroke-width="1.400" fill="none"/><rect x="3.400" y="3.600" width="10.200" height="7.600" fill="#3c3c3e"/><text x="8.300" y="10.200" font-family="Liberation Sans" font-size="7.400" font-weight="bold" fill="#ececec" text-anchor="middle">abl</text></svg><span>编辑框</span></div>
<div class="ti" style="top:210px"><svg width="16" height="16" viewBox="0 0 16 16"><path d="M1.500 14.500l5-13h3l5 13h-3l-1-3h-5l-1 3zM6.200 9h3.600l-1.800-5z" stroke="#ececec" stroke-width="1.100" fill="none"/></svg><span>标签</span></div>
<div class="ti" style="top:242px"><svg width="16" height="16" viewBox="0 0 16 16"><path d="M4.500 4V1h7l3 3v10h-3" stroke="#ececec" stroke-width="1.300" fill="none"/><rect x="1" y="5" width="10.500" height="10" fill="#ececec"/><g fill="#252526"><rect x="2.500" y="7" width="2" height="1.500"/><rect x="5.500" y="7" width="2" height="1.500"/><rect x="8.500" y="7" width="2" height="1.500"/><rect x="2.500" y="9.500" width="2" height="1.500"/><rect x="5.500" y="9.500" width="2" height="1.500"/><rect x="8.500" y="9.500" width="2" height="1.500"/><rect x="2.500" y="12" width="2" height="1.500"/><rect x="5.500" y="12" width="2" height="1.500"/><rect x="8.500" y="12" width="2" height="1.500"/></g></svg><span>表格</span></div>
<div class="ti" style="top:274px"><svg width="16" height="16" viewBox="0 0 16 16"><path d="M2.500 12l4.200-11h2.600l4.200 11h-2.800l-.900-2.600h-3.800l-.900 2.600zM6.700 7.400h2.600l-1.300-3.800z" fill="#1f62bd" fill-rule="evenodd" stroke="#ececec" stroke-width=".9"/><rect x="1.500" y="13" width="13" height="1.200" fill="#ececec"/><rect x="1.500" y="14.200" width="13" height="1.300" fill="#1f62bd"/></svg><span>超级链接框</span></div>
<div class="ti" style="top:306px"><svg width="16" height="16" viewBox="0 0 16 16"><path d="M4.500 5.500V1.200h7V5.500" stroke="#ececec" stroke-width="1.400" fill="none"/><rect x="1.200" y="5.200" width="13.600" height="6.600" rx="1.500" stroke="#ececec" stroke-width="1.400" fill="none"/><rect x="4.200" y="9.600" width="7.600" height="5.200" fill="#252526" stroke="#ececec" stroke-width="1.400"/><path d="M3 7.500h2" stroke="#ececec" stroke-width="1"/></svg><span>打印机</span></div>
<div class="ti" style="top:338px"><svg width="16" height="16" viewBox="0 0 16 16"><circle cx="8" cy="8" r="6.200" stroke="#ececec" stroke-width="1.600" fill="none"/><circle cx="8" cy="8" r="2.800" fill="#ececec"/></svg><span>单选框</span></div>
<div class="ti" style="top:370px"><svg width="16" height="16" viewBox="0 0 16 16"><rect x="1.500" y="2" width="13" height="12.500" rx="1" stroke="#ececec" stroke-width="1.400" fill="none"/><path d="M5 7l3-2.800 3 2.800zM5 9.500l3 2.800 3-2.800z" fill="#ececec"/><path d="M4 8.200h8" stroke="#ececec" stroke-width="1"/></svg><span>调节器</span></div>
<div class="ti" style="top:402px"><svg width="16" height="16" viewBox="0 0 16 16"><rect x="1" y="3" width="11" height="10" rx="1" stroke="#ececec" stroke-width="1.500" fill="none"/><rect x="8" y="6" width="7.500" height="4" fill="#ececec"/><rect x="9.500" y="7.300" width="4" height="1.400" fill="#252526"/></svg><span>端口</span></div>
<div class="ti" style="top:434px"><svg width="16" height="16" viewBox="0 0 16 16"><rect x="1" y="3.200" width="14" height="11.800" fill="#ececec" stroke="#ececec" stroke-width="1.400"/><rect x="2.400" y="4.600" width="11.200" height="9" fill="#eeeeee" stroke="#252526" stroke-width=".7"/><rect x="4" y=".6" width="8" height="4.500" fill="#252526"/><text x="8" y="4.800" font-family="Liberation Sans" font-size="5.500" font-weight="bold" fill="#ececec" text-anchor="middle">XY</text></svg><span>分组框</span></div>
<div class="ti" style="top:466px"><svg width="16" height="16" viewBox="0 0 16 16"><rect x="3.500" y="1" width="9" height="14" rx="1" stroke="#ececec" stroke-width="1.500" fill="#e4e4e4"/><rect x="5" y="2.500" width="6" height="11" fill="none" stroke="#252526" stroke-width=".8"/><path d="M6 10.200h4M6 12h4" stroke="#252526" stroke-width="1"/><rect x="6" y="3.500" width="4" height="1.200" fill="#252526"/></svg><span>服务器</span></div>
<div class="ti" style="top:498px"><svg width="16" height="16" viewBox="0 0 16 16"><rect x=".7" y="4.500" width="14.600" height="7" stroke="#ececec" stroke-width="1.300" fill="#252526"/><rect x="2" y="5.800" width="3.600" height="4.400" fill="#ececec"/><rect x="10.400" y="5.800" width="3.600" height="4.400" fill="#ececec"/><rect x="6.800" y="5.800" width="2.400" height="4.400" fill="#ececec"/><path d="M4.800 6.600v2.800l-2-1.400zM11.200 6.600v2.800l2-1.400z" fill="#252526"/></svg><span>横向滚动条</span></div>
<div class="ti" style="top:530px"><svg width="16" height="16" viewBox="0 0 16 16"><path d="M1.500 2h6.500v7.500l-3.250 4-3.250-4z" stroke="#ececec" stroke-width="1.500" fill="#e4e4e4"/><path d="M3.300 3.800h2.900v5l-1.450 1.800-1.450-1.800z" fill="none" stroke="#252526" stroke-width=".8"/><rect x="8" y="5.800" width="7.500" height="2.400" fill="none" stroke="#ececec" stroke-width="1.200"/></svg><span>滑块条</span></div>
<div class="ti" style="top:562px"><svg width="16" height="16" viewBox="0 0 16 16"><path d="M6.500 4V1h8.500v9h-5" stroke="#ececec" stroke-width="1.300" fill="none"/><rect x="11.500" y="2.200" width="2.400" height="2.400" fill="#6a6a6a"/><rect x="9" y="4.500" width="3" height="3" fill="none" stroke="#ececec" stroke-width="1"/><path d="M1 6.200a4 1.800 0 0 1 8 0v6.800a4 1.800 0 0 1-8 0z" fill="#2aa0e8" stroke="#ececec" stroke-width="1"/><ellipse cx="5" cy="6.200" rx="3.400" ry="1.300" fill="#8fd0ff"/></svg><span>画板</span></div>
<div class="ti" style="top:594px"><svg width="16" height="16" viewBox="0 0 16 16"><rect x="1" y="4" width="14" height="8" rx="1" stroke="#ececec" stroke-width="1.400" fill="#252526"/><rect x="3" y="6" width="10" height="4" fill="#e4e4e4"/><rect x="3" y="6.300" width="5.500" height="3.400" fill="#1f8fe8"/></svg><span>进度条</span></div>
<div class="ti" style="top:626px"><svg width="16" height="16" viewBox="0 0 16 16"><path d="M6 5V1h9v9.500h-5" stroke="#ececec" stroke-width="1.300" fill="none"/><path d="M10.500 3v4M12 3v5M13.400 3v3" stroke="#ececec" stroke-width="1"/><rect x="1.500" y="4.500" width="8" height="10.500" fill="#3a3a3a" stroke="#ececec" stroke-width="1.400"/><path d="M3 7h4.500M3 9h4.500" stroke="#ececec" stroke-width="1"/><rect x="6.500" y="12" width="1.300" height="1.300" fill="#ececec"/></svg><span>客户</span></div>
<div class="ti" style="top:658px"><svg width="16" height="16" viewBox="0 0 16 16"><rect x="1" y="1" width="14" height="14" stroke="#ececec" stroke-width="1.600" fill="#252526"/><path d="M4.500 5.500h6M4.500 8h7M4.500 10.500h5" stroke="#ececec" stroke-width="1.300"/></svg><span>列表框</span></div>
<div class="ti" style="top:690px"><svg width="16" height="16" viewBox="0 0 16 16"><path d="M.7 1.300h3.300v3.700" stroke="#ececec" stroke-width="1.300" fill="none"/><path d="M.7 1.300h14.600v13.700h-11.300" stroke="#ececec" stroke-width="1.400" fill="none"/><path d="M4 1.300v13.700" stroke="#ececec" stroke-width="1.400"/><path d="M6 4.700h1.800M9 4.700h4.600M6 8h1.800M9 8h4.600M6 11.300h1.800M9 11.300h4.600" stroke="#ececec" stroke-width="1.700"/></svg><span>目录框</span></div>
<div class="ti" style="top:722px"><svg width="16" height="16" viewBox="0 0 16 16"><rect x="2" y="5" width="11" height="6.500" fill="#0d0d0d"/><path d="M3.500 7h8" stroke="#8a9a9a" stroke-width="1"/><path d="M3.500 9.700h8" stroke="#d8d8d8" stroke-width="1.200"/></svg><span>驱动器框</span></div>
<div class="a" style="left:1244px;top:761px;width:150px;height:20px;background:#252526"></div>
<div class="t" style="left:1244px;top:763px;width:150px;text-align:center;font-size:12px">扩展组件</div>
<div class="a" style="left:1244px;top:782px;width:150px;height:20px;background:#252526"></div>
<div class="t" style="left:1244px;top:784px;width:150px;text-align:center;font-size:12px">外部组件</div>
<!-- output panel -->
<div class="a" style="left:5px;top:817px;width:1390px;height:169px;border:1px solid #3f3f46"></div>
<div class="t" style="left:8px;top:822px;font-size:12px">输出</div>
<svg class="a" style="left:36px;top:827px" width="1298" height="5"><defs><pattern id="g36" width="4" height="4" patternUnits="userSpaceOnUse"><rect x="0" y="0" width="1" height="1" fill="#4d4d52"/><rect x="2" y="2" width="1" height="1" fill="#4d4d52"/></pattern></defs><rect width="1298" height="5" fill="url(#g36)"/></svg>
<svg class="a" style="left:1341px;top:822px" width="50" height="14" viewBox="0 0 50 14"><path d="M2 4.800h8l-4 4.200z" fill="#f1f1f1"/><g fill="#f1f1f1" shape-rendering="crispEdges"><rect x="22" y="2" width="5" height="1"/><rect x="22" y="2" width="1" height="6"/><rect x="25" y="2" width="2" height="6"/><rect x="21" y="8" width="7" height="1"/><rect x="24" y="9" width="1" height="3"/></g><path d="M37.800 3.600l8.400 6.800M46.200 3.600l-8.400 6.800" stroke="#f1f1f1" stroke-width="1.700"/></svg>
<div class="a" style="left:6px;top:841px;width:1388px;height:1px;background:#3f3f46"></div>
<div class="a" style="left:1377px;top:842px;width:17px;height:143px;background:#3e3e42"></div>
<div class="a" style="left:1378px;top:952px;width:14px;height:21px;background:#686868"></div>
<svg class="a" style="left:1379px;top:845px" width="12" height="6" viewBox="0 0 12 6"><path d="M0 6l6-6 6 6z" fill="#999"/></svg>
<svg class="a" style="left:1379px;top:976px" width="12" height="6" viewBox="0 0 12 6"><path d="M0 0h12l-6 6z" fill="#999"/></svg>
<svg class="a" style="left:11px;top:845px" width="9" height="14" viewBox="0 0 9 14"><path d="M1 1l7 6-7 6z" fill="#a5d68c" stroke="#1a1a1a" stroke-width=".8"/></svg>
<svg class="a" style="left:11px;top:864px" width="9" height="14" viewBox="0 0 9 14"><path d="M1 1l7 6-7 6z" fill="#a5d68c" stroke="#1a1a1a" stroke-width=".8"/></svg>
<div class="ol" style="top:843px;left:24px">[12:50:47] *&nbsp;&nbsp; “[success]登录成功! ”</div>
<div class="ol" style="top:862px;left:24px">[12:50:50] *</div>
<div class="ol" style="top:881px;left:30px;transform:scaleX(0.95);transform-origin:0 50%">“Llzp_2132_saltkey=</div>
<div class="ol" style="top:881px;left:293px;transform:scaleX(0.95);transform-origin:0 50%">_lastvisit=1703908221;Llzp_2132_sid=Sfea7q;Llzp_2132_lastact=1703911842%09member.php%09logging;Llzp_2132_auth</div>
<div class="ol" style="top:881px;left:auto;right:29px;transform:scaleX(0.95);transform-origin:100% 50%">_ucenter=be90fca7m341-9c77dL1u50x11866f9;Llzp_2132</div>
<div class="ol" style="top:900px;left:24px;transform:scaleX(0.92);transform-origin:0 50%">_sendmail=1;Llzp_2132</div>
<div class="ol" style="top:900px;left:191px;transform:scaleX(0.93);transform-origin:0 50%">stactivity=a</div>
<div class="ol" style="top:900px;left:295px;transform:scaleX(0.89);transform-origin:0 50%">xDSRjM</div>
<div class="ol" style="top:900px;left:auto;right:25px">V</div>
<div class="ol" style="top:919px;left:24px;transform:scaleX(0.93);transform-origin:0 50%">w6mkODGa2ZkiUp;Llzp</div>
<div class="ol" style="top:919px;left:auto;right:25px">0D0D0D0;</div>
<div class="ol" style="top:938px;left:24px;transform:scaleX(0.95);transform-origin:0 50%">Llzp_2132_creditrule=%E6%AF%8F%E5%A4</div>
<div class="ol" style="top:938px;left:auto;right:134px;transform:scaleX(0.97);transform-origin:100% 50%">10;Llzp_2132_checkfollow=1;Llzp_2132_lip=120.36.221.238%2C1703865044;</div>
<svg class="a" style="left:0;top:842px" width="1377" height="143" viewBox="0 842 1377 143"><defs><clipPath id="bl"><path d="M163 919L192 917H257L294 919H336L342 910 350 904 367 900 417 893 463 888H690L700 886H1346L1362 890 1370 900 1368 910 1355 916 1312 924 1310 936 1280 947 1237 942 1203 938 1167 942 1133 947 1053 950H787L760 955 740 959H335L320 957 300 950 297 946 200 944 165 940Z"/><rect x="153" y="880" width="140" height="21" rx="3"/><rect x="160" y="898" width="32" height="23"/><rect x="257" y="898" width="37" height="23"/><circle cx="50" cy="931" r="15"/><circle cx="95" cy="931" r="15"/></clipPath></defs><g clip-path="url(#bl)" shape-rendering="crispEdges"><rect x="0" y="842" width="1377" height="143" fill="#444447"/><rect x="140" y="880" width="20" height="20" fill="#48484b"/><rect x="160" y="880" width="20" height="20" fill="#404043"/><rect x="180" y="880" width="20" height="20" fill="#4b4b4e"/><rect x="200" y="880" width="20" height="20" fill="#464649"/><rect x="220" y="880" width="20" height="20" fill="#3c3c3f"/><rect x="240" y="880" width="20" height="20" fill="#3c3c3f"/><rect x="260" y="880" width="20" height="20" fill="#424245"/><rect x="280" y="880" width="20" height="20" fill="#3e3e41"/><rect x="300" y="880" width="20" height="20" fill="#3c3c3f"/><rect x="320" y="880" width="20" height="20" fill="#48484b"/><rect x="340" y="880" width="20" height="20" fill="#3e3e41"/><rect x="360" y="880" width="20" height="20" fill="#3c3c3f"/><rect x="380" y="880" width="20" height="20" fill="#3e3e41"/><rect x="400" y="880" width="20" height="20" fill="#404043"/><rect x="420" y="880" width="20" height="20" fill="#3c3c3f"/><rect x="440" y="880" width="20" height="20" fill="#3c3c3f"/><rect x="460" y="880" width="20" height="20" fill="#4b4b4e"/><rect x="480" y="880" width="20" height="20" fill="#4b4b4e"/><rect x="500" y="880" width="20" height="20" fill="#3c3c3f"/><rect x="520" y="880" width="20" height="20" fill="#404043"/><rect x="540" y="880" width="20" height="20" fill="#3c3c3f"/><rect x="560" y="880" width="20" height="20" fill="#3e3e41"/><rect x="580" y="880" width="20" height="20" fill="#4b4b4e"/><rect x="600" y="880" width="20" height="20" fill="#3c3c3f"/><rect x="620" y="880" width="20" height="20" fill="#424245"/><rect x="640" y="880" width="20" height="20" fill="#3e3e41"/><rect x="660" y="880" width="20" height="20" fill="#3c3c3f"/><rect x="680" y="880" width="20" height="20" fill="#404043"/><rect x="700" y="880" width="20" height="20" fill="#464649"/><rect x="720" y="880" width="20" height="20" fill="#464649"/><rect x="740" y="880" width="20" height="20" fill="#3e3e41"/><rect x="760" y="880" width="20" height="20" fill="#3c3c3f"/><rect x="780" y="880" width="20" height="20" fill="#3e3e41"/><rect x="800" y="880" width="20" height="20" fill="#3e3e41"/><rect x="820" y="880" width="20" height="20" fill="#4b4b4e"/><rect x="840" y="880" width="20" height="20" fill="#3c3c3f"/><rect x="860" y="880" width="20" height="20" fill="#404043"/><rect x="880" y="880" width="20" height="20" fill="#3c3c3f"/><rect x="900" y="880" width="20" height="20" fill="#3e3e41"/><rect x="920" y="880" width="20" height="20" fill="#424245"/><rect x="940" y="880" width="20" height="20" fill="#404043"/><rect x="960" y="880" width="20" height="20" fill="#48484b"/><rect x="980" y="880" width="20" height="20" fill="#4b4b4e"/><rect x="1000" y="880" width="20" height="20" fill="#404043"/><rect x="1020" y="880" width="20" height="20" fill="#3e3e41"/><rect x="1040" y="880" width="20" height="20" fill="#3c3c3f"/><rect x="1060" y="880" width="20" height="20" fill="#3e3e41"/><rect x="1080" y="880" width="20" height="20" fill="#48484b"/><rect x="1100" y="880" width="20" height="20" fill="#3e3e41"/><rect x="1120" y="880" width="20" height="20" fill="#424245"/><rect x="1140" y="880" width="20" height="20" fill="#464649"/><rect x="1160" y="880" width="20" height="20" fill="#404043"/><rect x="1180" y="880" width="20" height="20" fill="#3c3c3f"/><rect x="1200" y="880" width="20" height="20" fill="#3e3e41"/><rect x="1220" y="880" width="20" height="20" fill="#3e3e41"/><rect x="1240" y="880" width="20" height="20" fill="#464649"/><rect x="1260" y="880" width="20" height="20" fill="#404043"/><rect x="1280" y="880" width="20" height="20" fill="#48484b"/><rect x="1300" y="880" width="20" height="20" fill="#3c3c3f"/><rect x="1320" y="880" width="20" height="20" fill="#3e3e41"/><rect x="1340" y="880" width="20" height="20" fill="#464649"/><rect x="1360" y="880" width="20" height="20" fill="#3c3c3f"/><rect x="140" y="900" width="20" height="20" fill="#3e3e41"/><rect x="160" y="900" width="20" height="20" fill="#3c3c3f"/><rect x="180" y="900" width="20" height="20" fill="#3e3e41"/><rect x="200" y="900" width="20" height="20" fill="#404043"/><rect x="220" y="900" width="20" height="20" fill="#4b4b4e"/><rect x="240" y="900" width="20" height="20" fill="#464649"/><rect x="260" y="900" width="20" height="20" fill="#3e3e41"/><rect x="280" y="900" width="20" height="20" fill="#4b4b4e"/><rect x="300" y="900" width="20" height="20" fill="#424245"/><rect x="320" y="900" width="20" height="20" fill="#48484b"/><rect x="340" y="900" width="20" height="20" fill="#4b4b4e"/><rect x="360" y="900" width="20" height="20" fill="#3e3e41"/><rect x="380" y="900" width="20" height="20" fill="#4b4b4e"/><rect x="400" y="900" width="20" height="20" fill="#48484b"/><rect x="420" y="900" width="20" height="20" fill="#48484b"/><rect x="440" y="900" width="20" height="20" fill="#404043"/><rect x="460" y="900" width="20" height="20" fill="#424245"/><rect x="480" y="900" width="20" height="20" fill="#404043"/><rect x="500" y="900" width="20" height="20" fill="#464649"/><rect x="520" y="900" width="20" height="20" fill="#424245"/><rect x="540" y="900" width="20" height="20" fill="#404043"/><rect x="560" y="900" width="20" height="20" fill="#3c3c3f"/><rect x="580" y="900" width="20" height="20" fill="#3e3e41"/><rect x="600" y="900" width="20" height="20" fill="#48484b"/><rect x="620" y="900" width="20" height="20" fill="#3e3e41"/><rect x="640" y="900" width="20" height="20" fill="#4b4b4e"/><rect x="660" y="900" width="20" height="20" fill="#48484b"/><rect x="680" y="900" width="20" height="20" fill="#464649"/><rect x="700" y="900" width="20" height="20" fill="#4b4b4e"/><rect x="720" y="900" width="20" height="20" fill="#48484b"/><rect x="740" y="900" width="20" height="20" fill="#3e3e41"/><rect x="760" y="900" width="20" height="20" fill="#3c3c3f"/><rect x="780" y="900" width="20" height="20" fill="#3c3c3f"/><rect x="800" y="900" width="20" height="20" fill="#3e3e41"/><rect x="820" y="900" width="20" height="20" fill="#4b4b4e"/><rect x="840" y="900" width="20" height="20" fill="#404043"/><rect x="860" y="900" width="20" height="20" fill="#424245"/><rect x="880" y="900" width="20" height="20" fill="#48484b"/><rect x="900" y="900" width="20" height="20" fill="#404043"/><rect x="920" y="900" width="20" height="20" fill="#4b4b4e"/><rect x="940" y="900" width="20" height="20" fill="#4b4b4e"/><rect x="960" y="900" width="20" height="20" fill="#3c3c3f"/><rect x="980" y="900" width="20" height="20" fill="#464649"/><rect x="1000" y="900" width="20" height="20" fill="#3c3c3f"/><rect x="1020" y="900" width="20" height="20" fill="#424245"/><rect x="1040" y="900" width="20" height="20" fill="#3e3e41"/><rect x="1060" y="900" width="20" height="20" fill="#3e3e41"/><rect x="1080" y="900" width="20" height="20" fill="#424245"/><rect x="1100" y="900" width="20" height="20" fill="#424245"/><rect x="1120" y="900" width="20" height="20" fill="#48484b"/><rect x="1140" y="900" width="20" height="20" fill="#48484b"/><rect x="1160" y="900" width="20" height="20" fill="#464649"/><rect x="1180" y="900" width="20" height="20" fill="#48484b"/><rect x="1200" y="900" width="20" height="20" fill="#3e3e41"/><rect x="1220" y="900" width="20" height="20" fill="#4b4b4e"/><rect x="1240" y="900" width="20" height="20" fill="#3e3e41"/><rect x="1260" y="900" width="20" height="20" fill="#424245"/><rect x="1280" y="900" width="20" height="20" fill="#4b4b4e"/><rect x="1300" y="900" width="20" height="20" fill="#3c3c3f"/><rect x="1320" y="900" width="20" height="20" fill="#424245"/><rect x="1340" y="900" width="20" height="20" fill="#3c3c3f"/><rect x="1360" y="900" width="20" height="20" fill="#48484b"/><rect x="140" y="920" width="20" height="20" fill="#4b4b4e"/><rect x="160" y="920" width="20" height="20" fill="#464649"/><rect x="180" y="920" width="20" height="20" fill="#464649"/><rect x="200" y="920" width="20" height="20" fill="#3c3c3f"/><rect x="220" y="920" width="20" height="20" fill="#3c3c3f"/><rect x="240" y="920" width="20" height="20" fill="#464649"/><rect x="260" y="920" width="20" height="20" fill="#464649"/><rect x="280" y="920" width="20" height="20" fill="#48484b"/><rect x="300" y="920" width="20" height="20" fill="#464649"/><rect x="320" y="920" width="20" height="20" fill="#3e3e41"/><rect x="340" y="920" width="20" height="20" fill="#464649"/><rect x="360" y="920" width="20" height="20" fill="#424245"/><rect x="380" y="920" width="20" height="20" fill="#4b4b4e"/><rect x="400" y="920" width="20" height="20" fill="#48484b"/><rect x="420" y="920" width="20" height="20" fill="#464649"/><rect x="440" y="920" width="20" height="20" fill="#4b4b4e"/><rect x="460" y="920" width="20" height="20" fill="#464649"/><rect x="480" y="920" width="20" height="20" fill="#48484b"/><rect x="500" y="920" width="20" height="20" fill="#3c3c3f"/><rect x="520" y="920" width="20" height="20" fill="#4b4b4e"/><rect x="540" y="920" width="20" height="20" fill="#48484b"/><rect x="560" y="920" width="20" height="20" fill="#404043"/><rect x="580" y="920" width="20" height="20" fill="#3e3e41"/><rect x="600" y="920" width="20" height="20" fill="#3c3c3f"/><rect x="620" y="920" width="20" height="20" fill="#4b4b4e"/><rect x="640" y="920" width="20" height="20" fill="#3c3c3f"/><rect x="660" y="920" width="20" height="20" fill="#404043"/><rect x="680" y="920" width="20" height="20" fill="#424245"/><rect x="700" y="920" width="20" height="20" fill="#48484b"/><rect x="720" y="920" width="20" height="20" fill="#404043"/><rect x="740" y="920" width="20" height="20" fill="#464649"/><rect x="760" y="920" width="20" height="20" fill="#404043"/><rect x="780" y="920" width="20" height="20" fill="#4b4b4e"/><rect x="800" y="920" width="20" height="20" fill="#4b4b4e"/><rect x="820" y="920" width="20" height="20" fill="#424245"/><rect x="840" y="920" width="20" height="20" fill="#4b4b4e"/><rect x="860" y="920" width="20" height="20" fill="#3c3c3f"/><rect x="880" y="920" width="20" height="20" fill="#404043"/><rect x="900" y="920" width="20" height="20" fill="#4b4b4e"/><rect x="920" y="920" width="20" height="20" fill="#4b4b4e"/><rect x="940" y="920" width="20" height="20" fill="#3e3e41"/><rect x="960" y="920" width="20" height="20" fill="#48484b"/><rect x="980" y="920" width="20" height="20" fill="#404043"/><rect x="1000" y="920" width="20" height="20" fill="#424245"/><rect x="1020" y="920" width="20" height="20" fill="#4b4b4e"/><rect x="1040" y="920" width="20" height="20" fill="#424245"/><rect x="1060" y="920" width="20" height="20" fill="#3e3e41"/><rect x="1080" y="920" width="20" height="20" fill="#48484b"/><rect x="1100" y="920" width="20" height="20" fill="#464649"/><rect x="1120" y="920" width="20" height="20" fill="#4b4b4e"/><rect x="1140" y="920" width="20" height="20" fill="#48484b"/><rect x="1160" y="920" width="20" height="20" fill="#464649"/><rect x="1180" y="920" width="20" height="20" fill="#4b4b4e"/><rect x="1200" y="920" width="20" height="20" fill="#404043"/><rect x="1220" y="920" width="20" height="20" fill="#404043"/><rect x="1240" y="920" width="20" height="20" fill="#3c3c3f"/><rect x="1260" y="920" width="20" height="20" fill="#404043"/><rect x="1280" y="920" width="20" height="20" fill="#404043"/><rect x="1300" y="920" width="20" height="20" fill="#404043"/><rect x="1320" y="920" width="20" height="20" fill="#464649"/><rect x="1340" y="920" width="20" height="20" fill="#404043"/><rect x="1360" y="920" width="20" height="20" fill="#3c3c3f"/><rect x="140" y="940" width="20" height="20" fill="#4b4b4e"/><rect x="160" y="940" width="20" height="20" fill="#424245"/><rect x="180" y="940" width="20" height="20" fill="#3e3e41"/><rect x="200" y="940" width="20" height="20" fill="#404043"/><rect x="220" y="940" width="20" height="20" fill="#48484b"/><rect x="240" y="940" width="20" height="20" fill="#48484b"/><rect x="260" y="940" width="20" height="20" fill="#3c3c3f"/><rect x="280" y="940" width="20" height="20" fill="#404043"/><rect x="300" y="940" width="20" height="20" fill="#4b4b4e"/><rect x="320" y="940" width="20" height="20" fill="#3e3e41"/><rect x="340" y="940" width="20" height="20" fill="#48484b"/><rect x="360" y="940" width="20" height="20" fill="#3e3e41"/><rect x="380" y="940" width="20" height="20" fill="#3e3e41"/><rect x="400" y="940" width="20" height="20" fill="#48484b"/><rect x="420" y="940" width="20" height="20" fill="#404043"/><rect x="440" y="940" width="20" height="20" fill="#464649"/><rect x="460" y="940" width="20" height="20" fill="#424245"/><rect x="480" y="940" width="20" height="20" fill="#3e3e41"/><rect x="500" y="940" width="20" height="20" fill="#3e3e41"/><rect x="520" y="940" width="20" height="20" fill="#464649"/><rect x="540" y="940" width="20" height="20" fill="#464649"/><rect x="560" y="940" width="20" height="20" fill="#464649"/><rect x="580" y="940" width="20" height="20" fill="#3c3c3f"/><rect x="600" y="940" width="20" height="20" fill="#4b4b4e"/><rect x="620" y="940" width="20" height="20" fill="#424245"/><rect x="640" y="940" width="20" height="20" fill="#424245"/><rect x="660" y="940" width="20" height="20" fill="#424245"/><rect x="680" y="940" width="20" height="20" fill="#464649"/><rect x="700" y="940" width="20" height="20" fill="#424245"/><rect x="720" y="940" width="20" height="20" fill="#3e3e41"/><rect x="740" y="940" width="20" height="20" fill="#4b4b4e"/><rect x="760" y="940" width="20" height="20" fill="#4b4b4e"/><rect x="780" y="940" width="20" height="20" fill="#4b4b4e"/><rect x="800" y="940" width="20" height="20" fill="#4b4b4e"/><rect x="820" y="940" width="20" height="20" fill="#3c3c3f"/><rect x="840" y="940" width="20" height="20" fill="#4b4b4e"/><rect x="860" y="940" width="20" height="20" fill="#464649"/><rect x="880" y="940" width="20" height="20" fill="#4b4b4e"/><rect x="900" y="940" width="20" height="20" fill="#3c3c3f"/><rect x="920" y="940" width="20" height="20" fill="#404043"/><rect x="940" y="940" width="20" height="20" fill="#3c3c3f"/><rect x="960" y="940" width="20" height="20" fill="#404043"/><rect x="980" y="940" width="20" height="20" fill="#4b4b4e"/><rect x="1000" y="940" width="20" height="20" fill="#404043"/><rect x="1020" y="940" width="20" height="20" fill="#3c3c3f"/><rect x="1040" y="940" width="20" height="20" fill="#48484b"/><rect x="1060" y="940" width="20" height="20" fill="#3e3e41"/><rect x="1080" y="940" width="20" height="20" fill="#3c3c3f"/><rect x="1100" y="940" width="20" height="20" fill="#3c3c3f"/><rect x="1120" y="940" width="20" height="20" fill="#3c3c3f"/><rect x="1140" y="940" width="20" height="20" fill="#3e3e41"/><rect x="1160" y="940" width="20" height="20" fill="#404043"/><rect x="1180" y="940" width="20" height="20" fill="#3e3e41"/><rect x="1200" y="940" width="20" height="20" fill="#3c3c3f"/><rect x="1220" y="940" width="20" height="20" fill="#48484b"/><rect x="1240" y="940" width="20" height="20" fill="#3e3e41"/><rect x="1260" y="940" width="20" height="20" fill="#3c3c3f"/><rect x="1280" y="940" width="20" height="20" fill="#3c3c3f"/><rect x="1300" y="940" width="20" height="20" fill="#424245"/><rect x="1320" y="940" width="20" height="20" fill="#404043"/><rect x="1340" y="940" width="20" height="20" fill="#3e3e41"/><rect x="1360" y="940" width="20" height="20" fill="#4b4b4e"/></g></svg>
<div class="a" style="left:59px;top:985px;width:47px;height:20px;background:#252526;border:1px solid #3f3f46;border-top:none"></div>
<div class="bt" style="left:18px">提示</div>
<div class="bt" style="left:70px;color:#1c97ea">输出</div>
<div class="bt" style="left:115px">调用表</div>
<div class="bt" style="left:166px">监视表</div>
<div class="bt" style="left:217px">变量表</div>
<div class="bt" style="left:270px">搜寻1</div>
<div class="bt" style="left:321px">搜寻2</div>
<div class="bt" style="left:370px">剪辑历史</div>
<div class="a" style="left:0;top:1009px;width:1400px;height:11px;background:linear-gradient(90deg,#251a24,#2b1b24 40%,#2d1c26 60%,#2a1d2e)"></div>
<div class="a" style="left:48px;top:1010px;width:288px;height:10px;background:#f0f0f0"></div>
<div class="a" style="left:263px;top:1013px;width:19px;height:7px;background:#c09a88"></div><div class="a" style="left:287px;top:1017px;width:15px;height:3px;background:#c09a88"></div><div class="a" style="left:317px;top:1015px;width:13px;height:5px;background:#3a9a5a;border-radius:4px 4px 0 0"></div><div class="a" style="left:308px;top:1019px;width:7px;height:1px;background:#7ab0e0"></div>
<div class="a" style="left:403px;top:1016px;width:16px;height:8px;border-radius:8px 8px 0 0;background:#22b8c8"></div>
<div class="a" style="left:503px;top:1018px;width:11px;height:2px;background:#2a8ae0"></div>
<div class="a" style="left:551px;top:1017px;width:13px;height:6px;border-radius:6px 6px 0 0;background:#e8b820"></div>
<div class="a" style="left:596px;top:1017px;width:22px;height:3px;background:#e8e8e8"></div>
<div class="a" style="left:644px;top:1017px;width:23px;height:6px;border-radius:5px 5px 0 0;background:#f4f4f4"></div>
<div class="a" style="left:681px;top:1010px;width:48px;height:10px;background:#4c464b"></div><div class="a" style="left:693px;top:1017px;width:23px;height:3px;background:#e8e8e8"></div>
<div class="a" style="left:1037px;top:1018px;width:6px;height:6px;border-radius:3px;background:#8aa8e8"></div>
<div class="t" style="left:1295px;top:1012px;font-size:13px;color:#fff">12:50</div>
<div class="a" style="left:1395px;top:1010px;width:1px;height:10px;background:#8a8a8a"></div>
<div class="a" style="left:44px;top:1008px;width:296px;height:2px;background:#1d1b1d"></div>
</body></html>
